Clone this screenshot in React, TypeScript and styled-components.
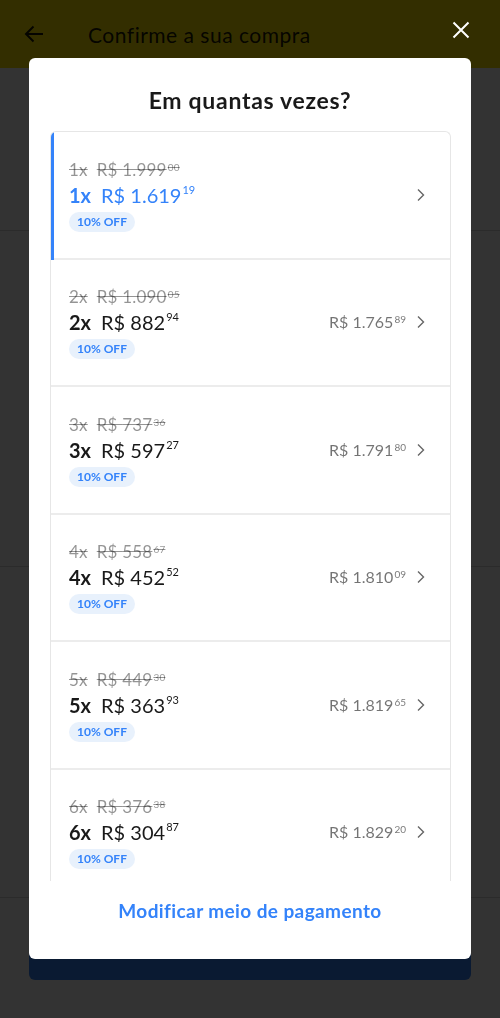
import React from "react";
import styled, { createGlobalStyle } from "styled-components";

const Global = createGlobalStyle`
  html, body { margin: 0; padding: 0; }
  body {
    width: 500px; height: 1018px; overflow: hidden;
    font-family: "Lato", "Open Sans", "Liberation Sans", sans-serif;
    background: #fff;
  }
`;

const Page = styled.div`
  width: 500px;
  height: 1018px;
  display: flex;
  flex-direction: column;
  background: #fff;
`;

const Header = styled.header`
  height: 68px;
  background: #ffe600;
  display: flex;
  align-items: center;
  padding: 0 0 0 24px;
  gap: 44px;
  flex-shrink: 0;
`;

const HeaderTitle = styled.h1`
  margin: 0;
  font-size: 21px;
  font-weight: 400;
  color: rgba(0, 0, 0, 0.9);
  letter-spacing: 0.5px;
`;

const Section = styled.section<{ $h: number }>`
  height: ${(p) => p.$h}px;
  border-bottom: 1px solid #d6d6d6;
  flex-shrink: 0;
`;

const Footer = styled.div`
  padding: 34px 29px 0;
`;

const PrimaryButton = styled.div`
  height: 48px;
  background: #3483fa;
  border-radius: 6px;
`;

const Overlay = styled.div`
  position: fixed;
  inset: 0;
  background: rgba(0, 0, 0, 0.8);
`;

const CloseButton = styled.button`
  position: absolute;
  top: 19px;
  left: 450px;
  width: 22px;
  height: 22px;
  padding: 0;
  border: 0;
  background: none;
  display: flex;
  align-items: center;
  justify-content: center;
`;

const Modal = styled.div`
  position: absolute;
  top: 58px;
  left: 29px;
  width: 442px;
  height: 901px;
  background: #fff;
  border-radius: 6px;
  display: flex;
  flex-direction: column;
  overflow: hidden;
`;

const ModalTitle = styled.h2`
  margin: 28px 0 17px;
  font-size: 23px;
  line-height: 28px;
  font-weight: 700;
  text-align: center;
  letter-spacing: 0.7px;
  color: rgba(0, 0, 0, 0.9);
`;

const List = styled.div`
  margin: 0 20px 0 21px;
  flex: 1;
  overflow: hidden;
  border: 1px solid #e6e6e6;
  border-bottom: 0;
  border-radius: 6px 6px 0 0;
`;

const Row = styled.div<{ $selected?: boolean }>`
  position: relative;
  height: 125.5px;
  border-bottom: 2px solid #ececec;
  display: flex;
  align-items: center;
  padding: 0 23px 0 18px;
  box-sizing: content-box;
  ${(p) =>
    p.$selected
      ? `&::before { content: ""; position: absolute; left: -1px; top: -1px; bottom: -2px; width: 4px; background: #3483fa; }`
      : ""}
`;

const RowMain = styled.div`
  flex: 1;
  display: flex;
  flex-direction: column;
  align-items: flex-start;
  padding-top: 2px;
`;

const OldPrice = styled.div`
  font-size: 17px;
  line-height: 20px;
  color: rgba(0, 0, 0, 0.42);
  text-decoration: line-through;
  display: flex;
  align-items: flex-start;
  letter-spacing: 0.2px;
`;

const MainPrice = styled.div<{ $selected?: boolean }>`
  font-size: 20px;
  line-height: 26px;
  margin-top: 2px;
  color: ${(p) => (p.$selected ? "#3483fa" : "rgba(0,0,0,0.9)")};
  display: flex;
  align-items: flex-start;
`;

const Qty = styled.span`
  font-weight: 700;
  margin-right: 10px;
`;

const OldQty = styled.span`
  margin-right: 9px;
`;

const Cents = styled.span<{ $size?: number }>`
  font-size: ${(p) => p.$size ?? 10}px;
  line-height: 1;
  margin-left: 1px;
  margin-top: 2px;
`;

const Badge = styled.span`
  margin-top: 4px;
  font-size: 12px;
  line-height: 20px;
  font-weight: 700;
  color: #3483fa;
  background: rgba(65, 137, 230, 0.12);
  border-radius: 10px;
  padding: 0 8px;
`;

const Total = styled.div`
  font-size: 16px;
  line-height: 20px;
  color: rgba(0, 0, 0, 0.55);
  display: flex;
  align-items: flex-start;
  margin-right: 9px;
`;

const ModalFooter = styled.div`
  height: 78px;
  flex-shrink: 0;
  display: flex;
  justify-content: center;
  padding-top: 18px;
  box-sizing: border-box;
`;

const LinkButton = styled.span`
  font-size: 19px;
  line-height: 24px;
  font-weight: 700;
  letter-spacing: 0.4px;
  color: #3483fa;
`;

const Chevron = () => (
  <svg width="12" height="14" viewBox="0 0 12 14">
    <path d="M3 1.5 L8.5 7 L3 12.5" fill="none" stroke="#666" strokeWidth="1.4" />
  </svg>
);

type Opt = { n: number; old: [string, string]; price: [string, string]; total?: [string, string] };

const options: Opt[] = [
  { n: 1, old: ["1.999", "00"], price: ["1.619", "19"] },
  { n: 2, old: ["1.090", "05"], price: ["882", "94"], total: ["1.765", "89"] },
  { n: 3, old: ["737", "36"], price: ["597", "27"], total: ["1.791", "80"] },
  { n: 4, old: ["558", "67"], price: ["452", "52"], total: ["1.810", "09"] },
  { n: 5, old: ["449", "30"], price: ["363", "93"], total: ["1.819", "65"] },
  { n: 6, old: ["376", "38"], price: ["304", "87"], total: ["1.829", "20"] },
];

export default function App() {
  return (
    <>
      <Global />
      <Page>
        <Header>
          <svg width="20" height="18" viewBox="0 0 20 18">
            <path d="M19 9 H2 M9.5 1.5 L2 9 L9.5 16.5" fill="none" stroke="rgba(0,0,0,0.9)" strokeWidth="2" />
          </svg>
          <HeaderTitle>Confirme a sua compra</HeaderTitle>
        </Header>
        <Section $h={162} />
        <Section $h={335} />
        <Section $h={330} />
        <Footer>
          <PrimaryButton />
        </Footer>
      </Page>
      <Overlay>
        <CloseButton aria-label="Fechar">
          <svg width="18" height="18" viewBox="0 0 18 18">
            <path d="M1.5 1.5 L16.5 16.5 M16.5 1.5 L1.5 16.5" stroke="#fff" strokeWidth="2" />
          </svg>
        </CloseButton>
        <Modal>
          <ModalTitle>Em quantas vezes?</ModalTitle>
          <List>
            {options.map((o) => {
              const sel = o.n === 1;
              return (
                <Row key={o.n} $selected={sel}>
                  <RowMain>
                    <OldPrice>
                      <OldQty>{o.n}x</OldQty>R$ {o.old[0]}
                      <Cents>{o.old[1]}</Cents>
                    </OldPrice>
                    <MainPrice $selected={sel}>
                      <Qty>{o.n}x</Qty>R$ {o.price[0]}
                      <Cents $size={11}>{o.price[1]}</Cents>
                    </MainPrice>
                    <Badge>10% OFF</Badge>
                  </RowMain>
                  {o.total && (
                    <Total>
                      R$ {o.total[0]}
                      <Cents>{o.total[1]}</Cents>
                    </Total>
                  )}
                  <Chevron />
                </Row>
              );
            })}
          </List>
          <ModalFooter>
            <LinkButton>Modificar meio de pagamento</LinkButton>
          </ModalFooter>
        </Modal>
      </Overlay>
    </>
  );
}
